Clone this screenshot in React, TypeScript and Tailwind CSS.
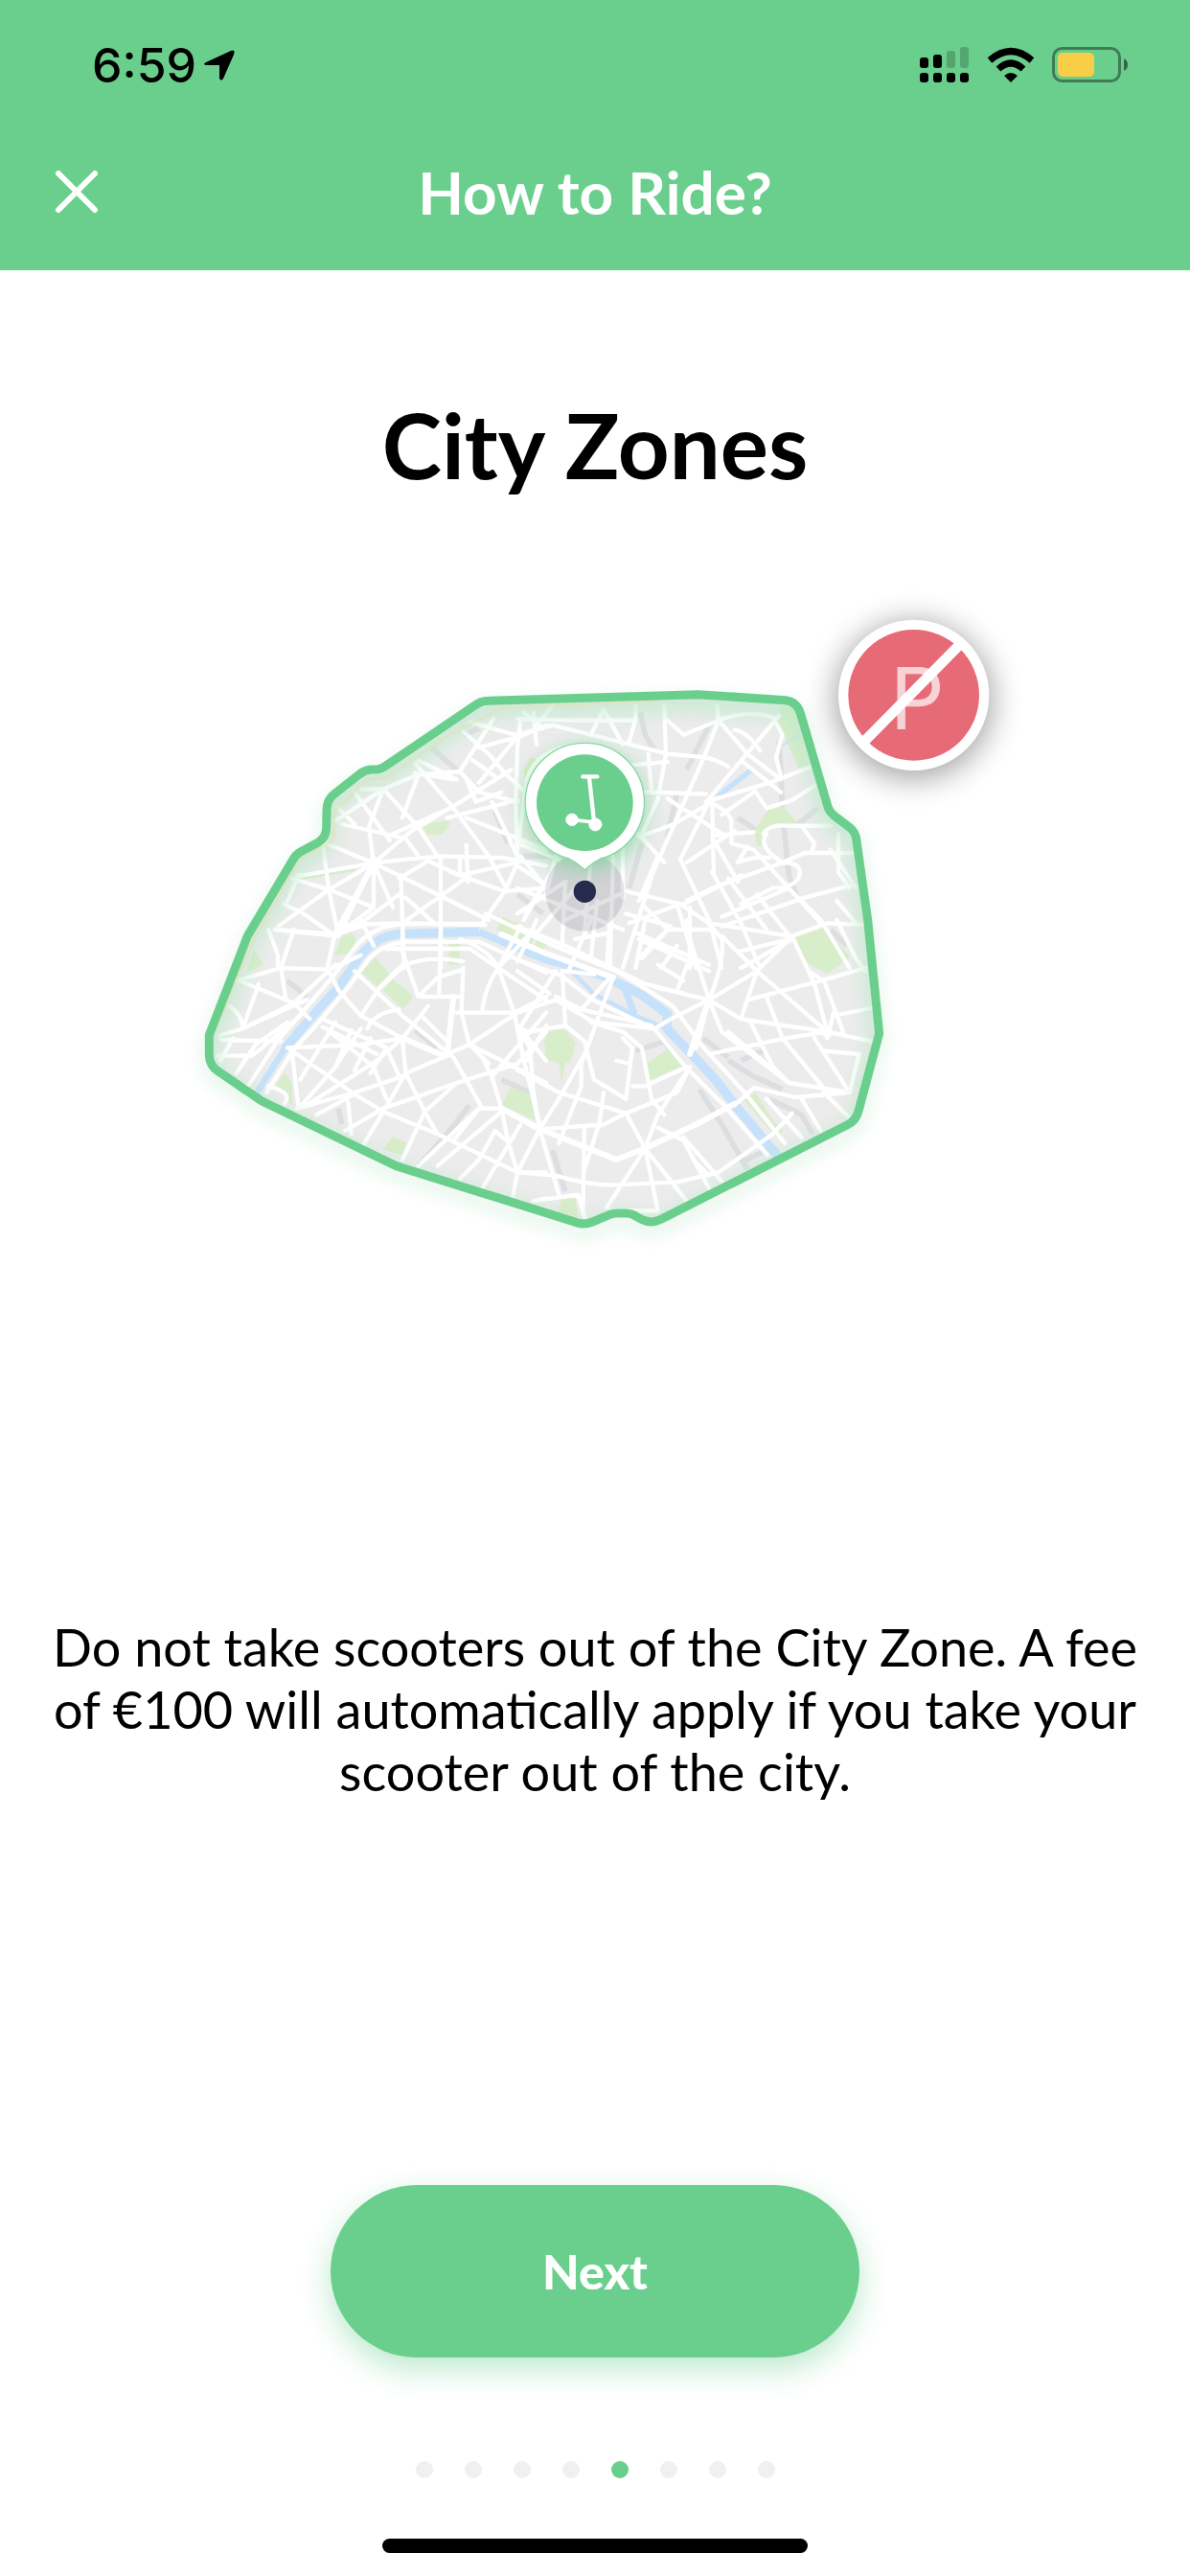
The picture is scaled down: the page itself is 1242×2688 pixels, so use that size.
import React from 'react';

const DOTS = [0, 1, 2, 3, 4, 5, 6, 7];
const ACTIVE_DOT = 4;

const ZONE =
  'M960 154 L1615 134 L1890 152 Q1925 156 1937 195 L2022 485 Q2026 500 2040 512 L2090 550 Q2110 566 2112 592 L2147 840 L2183 1195 L2119 1435 Q2111 1468 2082 1482 L1500 1777 Q1470 1792 1440 1778 L1415 1764 Q1404 1758 1390 1758 L1362 1758 Q1350 1758 1338 1763 L1285 1785 Q1260 1796 1235 1787 L670 1610 L250 1407 L115 1315 Q85 1296 85 1262 L85 1200 L205 890 L345 655 Q355 636 372 626 L425 598 Q452 582 452 550 L453 495 Q453 465 475 447 L555 384 Q570 371 590 369 L612 368 Q624 367 635 359 L925 163 Q940 154 960 154 Z';

// Each quarter of the town is drawn in its own local coordinates
const QUARTERS = [
  {
    id: 'nw',
    transform: 'translate(0 0)',
    parks:
      'M755 550 L790 533 L838 530 L835 548 L810 572 L770 573 Z M985 870 L1005 830 L1110 880 L1090 925 Z M1115 885 L1150 895 L1130 938 L1105 930 Z M500 890 L530 880 L545 900 L530 945 L478 950 Z M1070 370 L1090 330 L1115 340 L1100 440 L1075 410 Z M360 706 L540 664 L545 686 L362 716 Z',
    rail: 'M780 300 L860 370 M980 500 L1020 600 M930 240 L880 262',
    roads:
      'M600 662 L450 600 M600 662 L360 703 M600 662 L460 745 M600 662 L490 890 M600 662 L585 550 L630 430 M600 662 L720 560 L830 495 M600 662 L700 650 L815 640 L1000 645 L1140 670 M600 662 L810 765 L960 840 M600 662 L660 800 M600 662 L600 800 M500 540 L700 585 L740 640 M440 600 L460 745 L490 890 M345 710 L460 745 L600 800 M540 440 L650 590 M630 430 L740 550 L800 640 M480 530 L630 430 L740 385 L870 375 M730 350 L850 490 L960 640 L1020 750 M690 520 L740 385 M880 250 L960 320 L1010 380 L1140 500 M975 210 L870 375 L930 440 L1050 470 M1060 210 L1050 300 L1045 470 L1050 660 M900 220 L1060 265 L1140 230 M930 300 L1060 265 M1030 370 L840 490 L650 575 M830 520 L1050 465 M1050 265 L930 410 M910 340 L980 390 M890 400 L920 470 L1000 440 M970 470 L1050 640 M810 640 L810 990 M685 700 L695 990 M890 605 L895 720 M680 710 L770 655 L870 700 L1050 660 M700 770 L790 850 M690 850 L810 765 L900 700 M870 640 L870 700 M520 855 L690 850 L950 855 M320 790 L380 820 L480 890 M290 870 L480 890 L600 800 M300 860 L460 745 M480 890 L560 850 L680 760 M940 850 L1010 750 L1140 740 M950 820 L1140 910 M890 520 L1140 620 M1010 750 L1060 640 L1140 740 M840 690 L1010 750 M1075 820 L1140 720 M330 780 L365 700 M560 430 L640 430 M740 340 L860 400 M1100 190 L1110 290 M490 490 L540 540 M850 400 L730 380 M560 840 L600 920',
  },
  {
    id: 'sw',
    transform: 'translate(0 840)',
    parks:
      'M605 118 L650 170 L612 210 L560 162 Z M660 185 L725 240 L690 278 L630 220 Z M835 60 L875 60 L865 140 L835 140 Z M320 478 L345 510 L345 580 L292 520 Z M658 678 L705 697 L690 738 L630 718 Z M1030 525 L1090 545 L1105 627 L1000 578 Z M225 95 L255 140 L200 165 Z M1132 380 L1150 350 L1150 440 Z',
    rail: 'M900 580 L830 670 L740 770 M730 345 L800 400 M1000 500 L1090 540 M490 590 L500 640 M330 190 L390 240',
    roads:
      'M290 30 L480 45 L560 20 M270 30 L300 110 L300 150 M350 30 L310 150 M170 190 L310 150 L460 155 L560 110 M310 150 L325 250 M180 190 L350 260 L400 310 M240 200 L190 340 M150 270 Q190 300 190 340 M190 340 L350 260 L480 140 M120 360 L190 340 L390 250 M110 425 L220 425 L370 300 M120 375 L310 380 M160 370 L120 440 M170 480 L230 390 L330 320 M480 40 L455 150 L490 220 M200 530 L298 380 L470 180 L550 75 Q605 18 690 12 L940 12 M265 540 L350 405 L430 318 L525 205 L585 122 Q625 78 700 68 L930 68 L1140 165 M330 400 L560 390 L690 370 M330 400 L540 545 M345 420 L365 590 L480 460 L560 340 M360 590 L540 540 L690 490 M390 580 L610 440 L690 370 M440 310 L640 400 M440 335 L610 420 M450 340 L600 460 L640 560 M490 220 L560 300 L690 370 L820 425 M540 160 L690 300 L850 430 L940 590 M620 210 L700 130 M750 240 L870 240 M560 300 L620 210 L700 140 Q780 110 880 130 M690 40 L690 100 L740 240 L800 180 L880 155 M810 20 L805 240 M880 150 L875 290 L900 390 L960 450 M860 290 L1040 290 L1140 240 M830 420 L900 390 L1050 290 M940 280 Q950 210 990 150 L1060 20 M990 150 L1040 290 L1070 440 L1120 640 M870 60 Q960 90 990 150 M640 90 L900 90 L1140 250 M1000 140 L1100 30 M690 370 L700 480 L760 600 L800 670 M640 400 L680 490 M540 545 L630 600 L800 670 L1050 790 L1140 790 M630 600 L700 480 L830 425 M570 700 L630 600 M510 660 L630 590 L860 510 L1050 450 L1140 350 M520 570 L530 670 M420 610 L540 545 M690 750 L760 600 L860 510 M740 770 L930 590 L1000 590 L1140 660 M800 770 L1000 600 M870 810 L930 750 L980 660 L1015 690 M1000 590 L1020 690 L1050 790 L1035 870 M940 840 L1060 640 M970 490 L1000 590 M900 390 L1140 510 M940 430 L970 490 L1140 290 M480 320 L370 500 M530 345 L480 460 M590 370 L540 470 M640 400 L590 480 M690 370 L770 270 M750 300 L830 380 M580 340 Q600 290 680 280 M850 690 L930 590 M1050 330 L1140 440 M1080 440 L1140 330 M270 520 Q350 540 320 575 M1100 880 L1140 870',
  },
  {
    id: 'ne',
    transform: 'translate(1050 0)',
    parks:
      'M825 165 L870 180 L915 355 L880 362 L812 210 Z M740 560 L785 495 L835 485 L878 538 L820 545 L775 570 L762 608 L750 605 Z M868 895 L965 863 L1040 955 L970 1008 L885 960 Z',
    rail: 'M385 190 L400 260 L430 310 M600 230 L530 370 M500 440 L470 580 M820 280 L830 500 L850 700 L880 780 M390 600 L350 740 M690 520 L750 560 M940 490 L880 540 M0 640 L120 640 M980 870 L1030 920 M0 760 L80 820',
    roads:
      'M0 260 L110 230 L470 320 L580 330 Q620 335 660 360 M270 180 L230 260 M270 180 L330 290 M0 210 L160 215 L370 215 M370 170 L370 215 L350 280 M460 170 L465 320 L440 460 L390 570 M625 170 L630 215 L580 340 L500 520 L390 770 M470 215 L520 260 L630 215 Q720 180 800 205 L830 260 L810 330 L825 390 M630 215 L720 320 L825 400 M820 200 L600 460 M680 245 Q720 250 760 310 M590 470 L790 410 L920 360 M360 355 L470 345 M400 440 L590 445 M470 460 L640 570 M410 320 L420 440 M610 470 L490 540 L380 580 M610 470 L615 700 M600 470 L510 650 L600 840 L640 990 M620 480 Q675 510 670 540 L670 600 L740 620 L850 740 L950 850 M880 770 L950 840 L1040 990 M620 575 L740 565 M740 430 L780 490 L860 465 L930 420 M700 340 L825 440 M740 440 L640 510 M770 570 Q790 540 840 545 L980 545 M780 570 Q750 610 830 660 L900 630 L1060 630 M890 545 L930 600 L920 630 M690 660 L720 610 M690 660 Q740 640 790 645 M530 780 L610 740 L830 660 M1005 570 L1005 690 L1040 740 M830 660 Q900 660 880 710 Q860 740 800 740 L700 790 M380 570 L460 660 M610 690 L700 850 L760 990 M660 710 L780 870 M615 590 L690 720 M340 750 L510 790 L600 850 L850 890 M510 790 L350 850 M520 790 L700 700 M860 890 L970 850 L1080 855 M640 860 L900 770 L1050 730 M850 740 L640 830 M440 640 L400 770 L330 990 M500 790 L560 990 M540 800 L540 990 M0 670 L90 730 M20 840 L100 700 M0 820 L150 720 M0 740 L330 870 M60 880 L200 720 M330 590 L330 770 M300 640 L290 990 M230 650 L210 880 M400 800 L470 870 L610 870 M380 960 L470 870 M390 900 L560 960 M340 820 L480 860 L390 960 M750 760 L860 900 L700 990 M250 780 L230 960 M150 720 L140 920 M0 600 L130 650 M120 640 L90 760 M150 840 L320 760 M180 900 L290 880 M0 620 L30 400 Q60 300 200 290 M1000 780 L1060 850 M530 660 L680 560 M380 780 L440 640 M110 170 L60 230 M20 190 L80 240 M980 620 L1060 740',
  },
  {
    id: 'se',
    transform: 'translate(1050 840)',
    parks:
      'M868 60 L965 23 L1040 118 L970 168 L900 120 Z M90 355 Q120 340 150 345 L183 385 L165 445 L150 448 L138 510 L130 445 L85 440 Z M405 450 L475 400 L522 455 L415 500 Z M710 565 L745 540 L805 635 L832 655 L815 685 Z M140 870 L180 865 L190 930 L125 915 Z',
    rail: 'M660 440 L740 490 L830 530 M700 440 L770 410 M790 560 L890 610 L925 670 M570 530 L640 640 L720 780 M580 370 L660 430 M110 720 L150 850 M370 410 L460 380 L520 460 M700 760 L780 720',
    roads:
      'M0 20 L150 80 L400 200 L520 230 M100 75 L320 165 L485 268 L588 405 L708 536 L838 700 M0 124 L140 175 L235 250 L430 342 L522 455 L652 585 L782 735 M600 250 Q650 130 640 60 L590 0 M600 250 L540 60 L530 0 M600 250 L750 160 L860 50 M600 250 L700 310 L970 350 M600 250 L560 400 M600 250 L480 310 L430 340 M600 250 L640 350 L850 510 L1040 540 M600 250 L430 210 M660 350 L850 510 M400 0 L370 150 M380 60 L600 160 M370 40 L600 140 M440 140 L520 190 M450 150 L500 80 M500 220 L540 120 M640 50 L750 160 L970 350 M690 100 L850 60 M860 50 L930 200 L970 350 M750 160 L700 310 M720 250 L950 190 L1090 150 M780 240 L830 370 L970 540 M910 160 L960 190 L1020 350 M1000 0 L1060 120 L1090 160 M730 320 L800 460 L850 510 M600 420 L840 370 L970 350 L1110 380 M990 300 L1110 275 M930 370 L1040 540 L1070 420 L960 410 M680 580 L740 525 L870 555 L1040 540 M890 560 L950 660 M960 540 L1040 620 M0 470 L130 540 L340 605 L500 540 L540 460 M340 605 L400 715 L440 910 M340 605 L270 640 L70 655 M270 540 L255 650 M210 380 L240 500 L340 560 L360 400 L330 370 M200 450 L200 520 L130 700 M210 420 L130 560 L70 655 M360 520 L400 520 L530 460 M390 400 L420 560 L460 610 M540 460 L440 610 L400 715 M230 320 L330 350 L390 400 M140 160 L150 330 L210 380 M0 290 L120 250 L240 320 L430 340 M120 160 L0 350 M300 180 L200 450 M0 340 L40 400 L50 540 L70 655 M0 340 L40 350 L150 330 M120 240 L200 280 L420 330 M310 440 L350 450 M70 655 L0 790 M70 655 L130 860 M0 790 L120 800 Q220 830 300 830 L500 820 L630 790 L800 670 L860 605 M210 655 L205 920 M255 640 L210 780 M400 715 L280 900 M400 715 L530 880 M440 650 L520 690 L600 840 M520 680 L650 830 M50 880 L190 860 L210 930 M780 560 L890 680 M300 910 L440 910 M560 760 L600 800 M200 280 L290 180 M60 0 L0 130 M230 0 L160 160 M290 0 L280 140 M0 160 L100 230 M150 160 L240 170 M990 290 L970 370',
  },
];

const BOULEVARDS =
  'M850 1080 L830 1260 M690 1210 L820 1265 M1110 1490 L1360 1590 L1450 1555 L1610 1480 L1730 1415 M1000 885 L1140 945 L1350 1020 M1650 1090 L1590 1260 M480 885 L600 662 M1000 1430 L1110 1490';

function Signal() {
  return (
    <svg className="h-[38px] w-[52px]" viewBox="0 0 52 38" aria-hidden="true">
      <rect x="0" y="11" width="9" height="11" rx="3" />
      <rect x="14" y="8" width="9" height="14" rx="3" />
      <rect x="28" y="4" width="9" height="18" rx="3" opacity=".2" />
      <rect x="42" y="0" width="9" height="22" rx="3" opacity=".2" />
      {[0, 14, 28, 42].map((x) => (
        <rect key={x} x={x} y="27" width="9" height="10" rx="3" />
      ))}
    </svg>
  );
}

function Wifi() {
  return (
    <svg className="h-[38px] w-[50px]" viewBox="0 0 50 38" aria-hidden="true">
      <path d="M25 37 L18 30 Q25 24 32 30 Z" />
      <path d="M12 23 Q25 11 38 23" fill="none" stroke="#000" strokeWidth="7" />
      <path d="M3 14 Q25 -5 47 14" fill="none" stroke="#000" strokeWidth="7" />
    </svg>
  );
}

function Battery() {
  return (
    <svg className="h-[38px] w-[80px]" viewBox="0 0 80 38" aria-hidden="true">
      <rect x="1.5" y="1.5" width="69" height="34" rx="9" fill="none" stroke="#000" strokeWidth="3" opacity=".4" />
      <rect x="6" y="6" width="38" height="25" rx="5" fill="#f7ce46" />
      <path d="M75 12 Q79 14 79 18.500 Q79 23 75 25 Z" opacity=".5" />
    </svg>
  );
}

function ZoneMap() {
  return (
    <svg
      className="block h-auto w-[880px] max-w-full overflow-visible"
      viewBox="-27 -240 2640 2100"
      role="img"
      aria-label="Map of the city zone"
    >
      <defs>
        <clipPath id="zone">
          <path d={ZONE} />
        </clipPath>
        <filter id="glow" x="-20%" y="-20%" width="140%" height="140%">
          <feGaussianBlur stdDeviation="26" />
        </filter>
        <filter id="pinGlow" x="-50%" y="-50%" width="200%" height="200%">
          <feGaussianBlur stdDeviation="34" />
        </filter>
        <filter id="badgeShadow" x="-50%" y="-50%" width="200%" height="200%">
          <feGaussianBlur stdDeviation="48" />
        </filter>
      </defs>

      <path d={ZONE} transform="translate(0 24)" fill="#fff" stroke="#6acf8d" strokeWidth="34" opacity=".25" filter="url(#glow)" />

      <g clipPath="url(#zone)" strokeLinejoin="round">
        <path d={ZONE} fill="#ececec" />
        {QUARTERS.map((q) => (
          <g key={q.id} transform={q.transform}>
            <path d={q.rail} fill="none" stroke="#dddee1" strokeWidth="17" />
            <path d={q.parks} fill="#d8edc9" />
          </g>
        ))}

        {/* River and canals */}
        <g fill="none" stroke="#c5e1fb">
          <path d="M225 1395 L320 1245" strokeWidth="20" />
          <path d="M320 1245 L400 1150 L490 1050 L560 950 Q610 888 690 883 L930 877" strokeWidth="28" />
          <path d="M930 877 L960 890 L1080 942 L1140 965 L1250 995 L1350 1030" strokeWidth="22" />
          <path d="M1350 1030 L1440 1075 L1520 1135 L1518 1180 L1600 1265 L1670 1340 L1740 1430 L1875 1590" strokeWidth="29" />
          <path d="M1210 990 L1290 1072 L1350 1103 L1420 1140 L1515 1178" strokeWidth="13" />
          <path d="M1380 1040 L1417 1135" strokeWidth="20" />
          <path d="M1675 455 L1785 368" strokeWidth="16" />
          <path d="M1870 300 L1935 258" strokeWidth="5" />
          <path d="M1640 1125 L1618 1195" strokeWidth="9" />
        </g>

        {QUARTERS.map((q) => (
          <path key={q.id} d={q.roads} transform={q.transform} fill="none" stroke="#fff" strokeWidth="13" strokeLinecap="round" />
        ))}
        <path d={BOULEVARDS} fill="none" stroke="#fff" strokeWidth="18" strokeLinecap="round" />
        <circle cx="600" cy="662" r="20" fill="#fff" />
        <circle cx="2020" cy="1192" r="18" fill="#fff" />

        <path d={ZONE} transform="translate(0 24)" fill="none" stroke="#bce8ca" strokeWidth="60" opacity=".7" filter="url(#glow)" />
        <path d="M85 1230 L225 900 L370 650 L475 590 L478 500 L580 400 L640 395 L830 265 L1000 176 L1500 154" fill="none" stroke="#e6dfae" strokeWidth="6" opacity=".6" />
      </g>

      <path d={ZONE} fill="none" stroke="#6acf8d" strokeWidth="27" strokeLinejoin="round" />

      {/* Scooter pin */}
      <circle cx="1261" cy="751" r="124" fill="#3b3650" opacity=".14" />
      <circle cx="1261" cy="490" r="190" fill="#6acf8d" opacity=".65" filter="url(#pinGlow)" />
      <path
        d="M1261 286 A184 184 0 0 1 1310 648 Q1290 657 1261 683 Q1232 657 1212 648 A184 184 0 0 1 1261 286 Z"
        fill="#fff"
        stroke="#86d8a2"
        strokeWidth="4"
      />
      <circle cx="1261" cy="473" r="151" fill="#6acf8d" />
      <circle cx="1261" cy="751" r="35" fill="#262a4e" />
      <g transform="translate(1050 0)" fill="#fff" stroke="#fff" strokeLinecap="round">
        <path d="M205 391 H250" strokeWidth="13" />
        <path d="M225 395 L240 530" strokeWidth="13" />
        <path d="M171 526 L242 534" strokeWidth="11" />
        <circle cx="171" cy="526" r="19" strokeWidth="2" />
        <circle cx="244" cy="541" r="20" strokeWidth="2" />
      </g>

      {/* No parking badge */}
      <circle cx="2291" cy="152" r="246" opacity=".36" filter="url(#badgeShadow)" />
      <circle cx="2291" cy="136" r="236" fill="#fff" />
      <circle cx="2291" cy="136" r="205" fill="#e66b76" />
      <text x="2216" y="243" className="font-['Inter']" fontSize="268" fill="#fff" opacity=".7">
        P
      </text>
      <path d="M2137 280 L2431 -18" stroke="#fff" strokeWidth="32" />
    </svg>
  );
}

export default function App() {
  return (
    <div className="flex min-h-screen flex-col bg-white font-['Lato',sans-serif] text-black">
      <header className="bg-[#6acf8d]">
        <div className="flex h-[136px] items-center justify-between pr-16 pl-24">
          <div className="flex items-center gap-2 font-['Inter',sans-serif] text-[50px] font-medium">
            <time>6:59</time>
            <svg className="h-8 w-8" viewBox="0 0 32 32" aria-hidden="true">
              <path d="M2 13 L28 1 Q33 -1 31 5 L20 30 Q18 33 16 30 V16 H2 Q-2 15 2 13 Z" />
            </svg>
          </div>
          <div className="flex items-center gap-[18px]">
            <Signal />
            <Wifi />
            <Battery />
          </div>
        </div>
        <div className="grid h-[146px] grid-cols-[1fr_auto_1fr] items-start px-14">
          <button type="button" aria-label="Close" className="mt-10 w-12">
            <svg className="size-12" viewBox="0 0 48 48" fill="none" stroke="#fff" strokeWidth="6" strokeLinecap="round">
              <path d="M5 5 L43 43 M43 5 L5 43" />
            </svg>
          </button>
          <h1 className="mt-7 text-[62px] leading-[72px] font-bold text-white">How to Ride?</h1>
        </div>
      </header>

      <main className="flex flex-1 flex-col items-center px-10">
        <h2 className="mt-[126px] text-[94px] leading-[112px] font-bold">City Zones</h2>
        <div className="mt-20 flex w-full justify-center">
          <ZoneMap />
        </div>
        <p className="mt-[386px] text-center text-[54px] leading-[65px]">
          Do not take scooters out of the City Zone. A fee of €100 will automatically apply if you take your scooter out of the city.
        </p>
      </main>

      <footer className="flex flex-col items-center pb-6">
        <button
          type="button"
          className="h-[180px] w-[552px] max-w-full rounded-full bg-[#6acf8d] text-[50px] font-black text-white shadow-[0_12px_32px_rgba(106,207,141,0.45)]"
        >
          Next
        </button>
        <div className="mt-[108px] flex gap-[33px]">
          {DOTS.map((dot) => (
            <span key={dot} className={dot === ACTIVE_DOT ? 'size-[18px] rounded-full bg-[#6acf8d]' : 'size-[18px] rounded-full bg-[#f0f0f0]'} />
          ))}
        </div>
        <div className="mt-[63px] h-[15px] w-[444px] rounded-full bg-black" />
      </footer>
    </div>
  );
}
